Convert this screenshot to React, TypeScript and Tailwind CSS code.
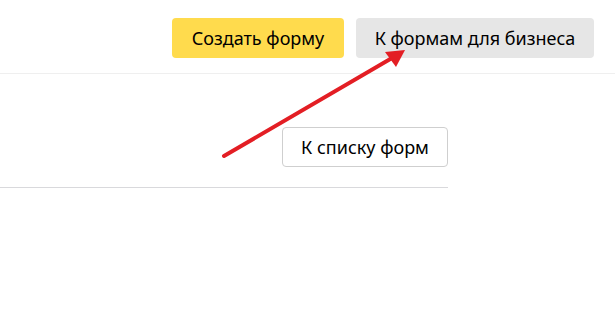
export default function App() {
  return (
    <div className="relative w-[615px] h-[320px] bg-white overflow-hidden font-['Noto_Sans',sans-serif] text-[18px] text-black">
      {/* Header */}
      <header className="flex justify-end items-center gap-3 h-[74px] pr-[21px] pt-[3px] border-b border-[#efefef]">
        <button className="h-10 w-[172px] rounded-[4px] bg-[#ffdb4d] text-[18px] leading-none">Создать форму</button>
        <button className="h-10 w-[238px] rounded-[4px] bg-[#e6e6e6] text-[18px] leading-none">К формам для бизнеса</button>
      </header>

      {/* Content */}
      <div className="w-[448px]">
        <div className="flex justify-end pt-[53px] pb-[20px] border-b border-[#d9d9dc]">
          <button className="h-10 w-[166px] rounded-[4px] border border-[#cfcfcf] bg-white text-[18px] leading-none">К списку форм</button>
        </div>
      </div>

      {/* Arrow annotation */}
      <svg className="absolute left-0 top-0 pointer-events-none" width="615" height="320">
        <line x1="224" y1="156" x2="392" y2="58" stroke="#e31e24" strokeWidth="4" strokeLinecap="round" />
        <polygon points="405,50 385,52 396,67" fill="#e31e24" />
      </svg>
    </div>
  );
}
